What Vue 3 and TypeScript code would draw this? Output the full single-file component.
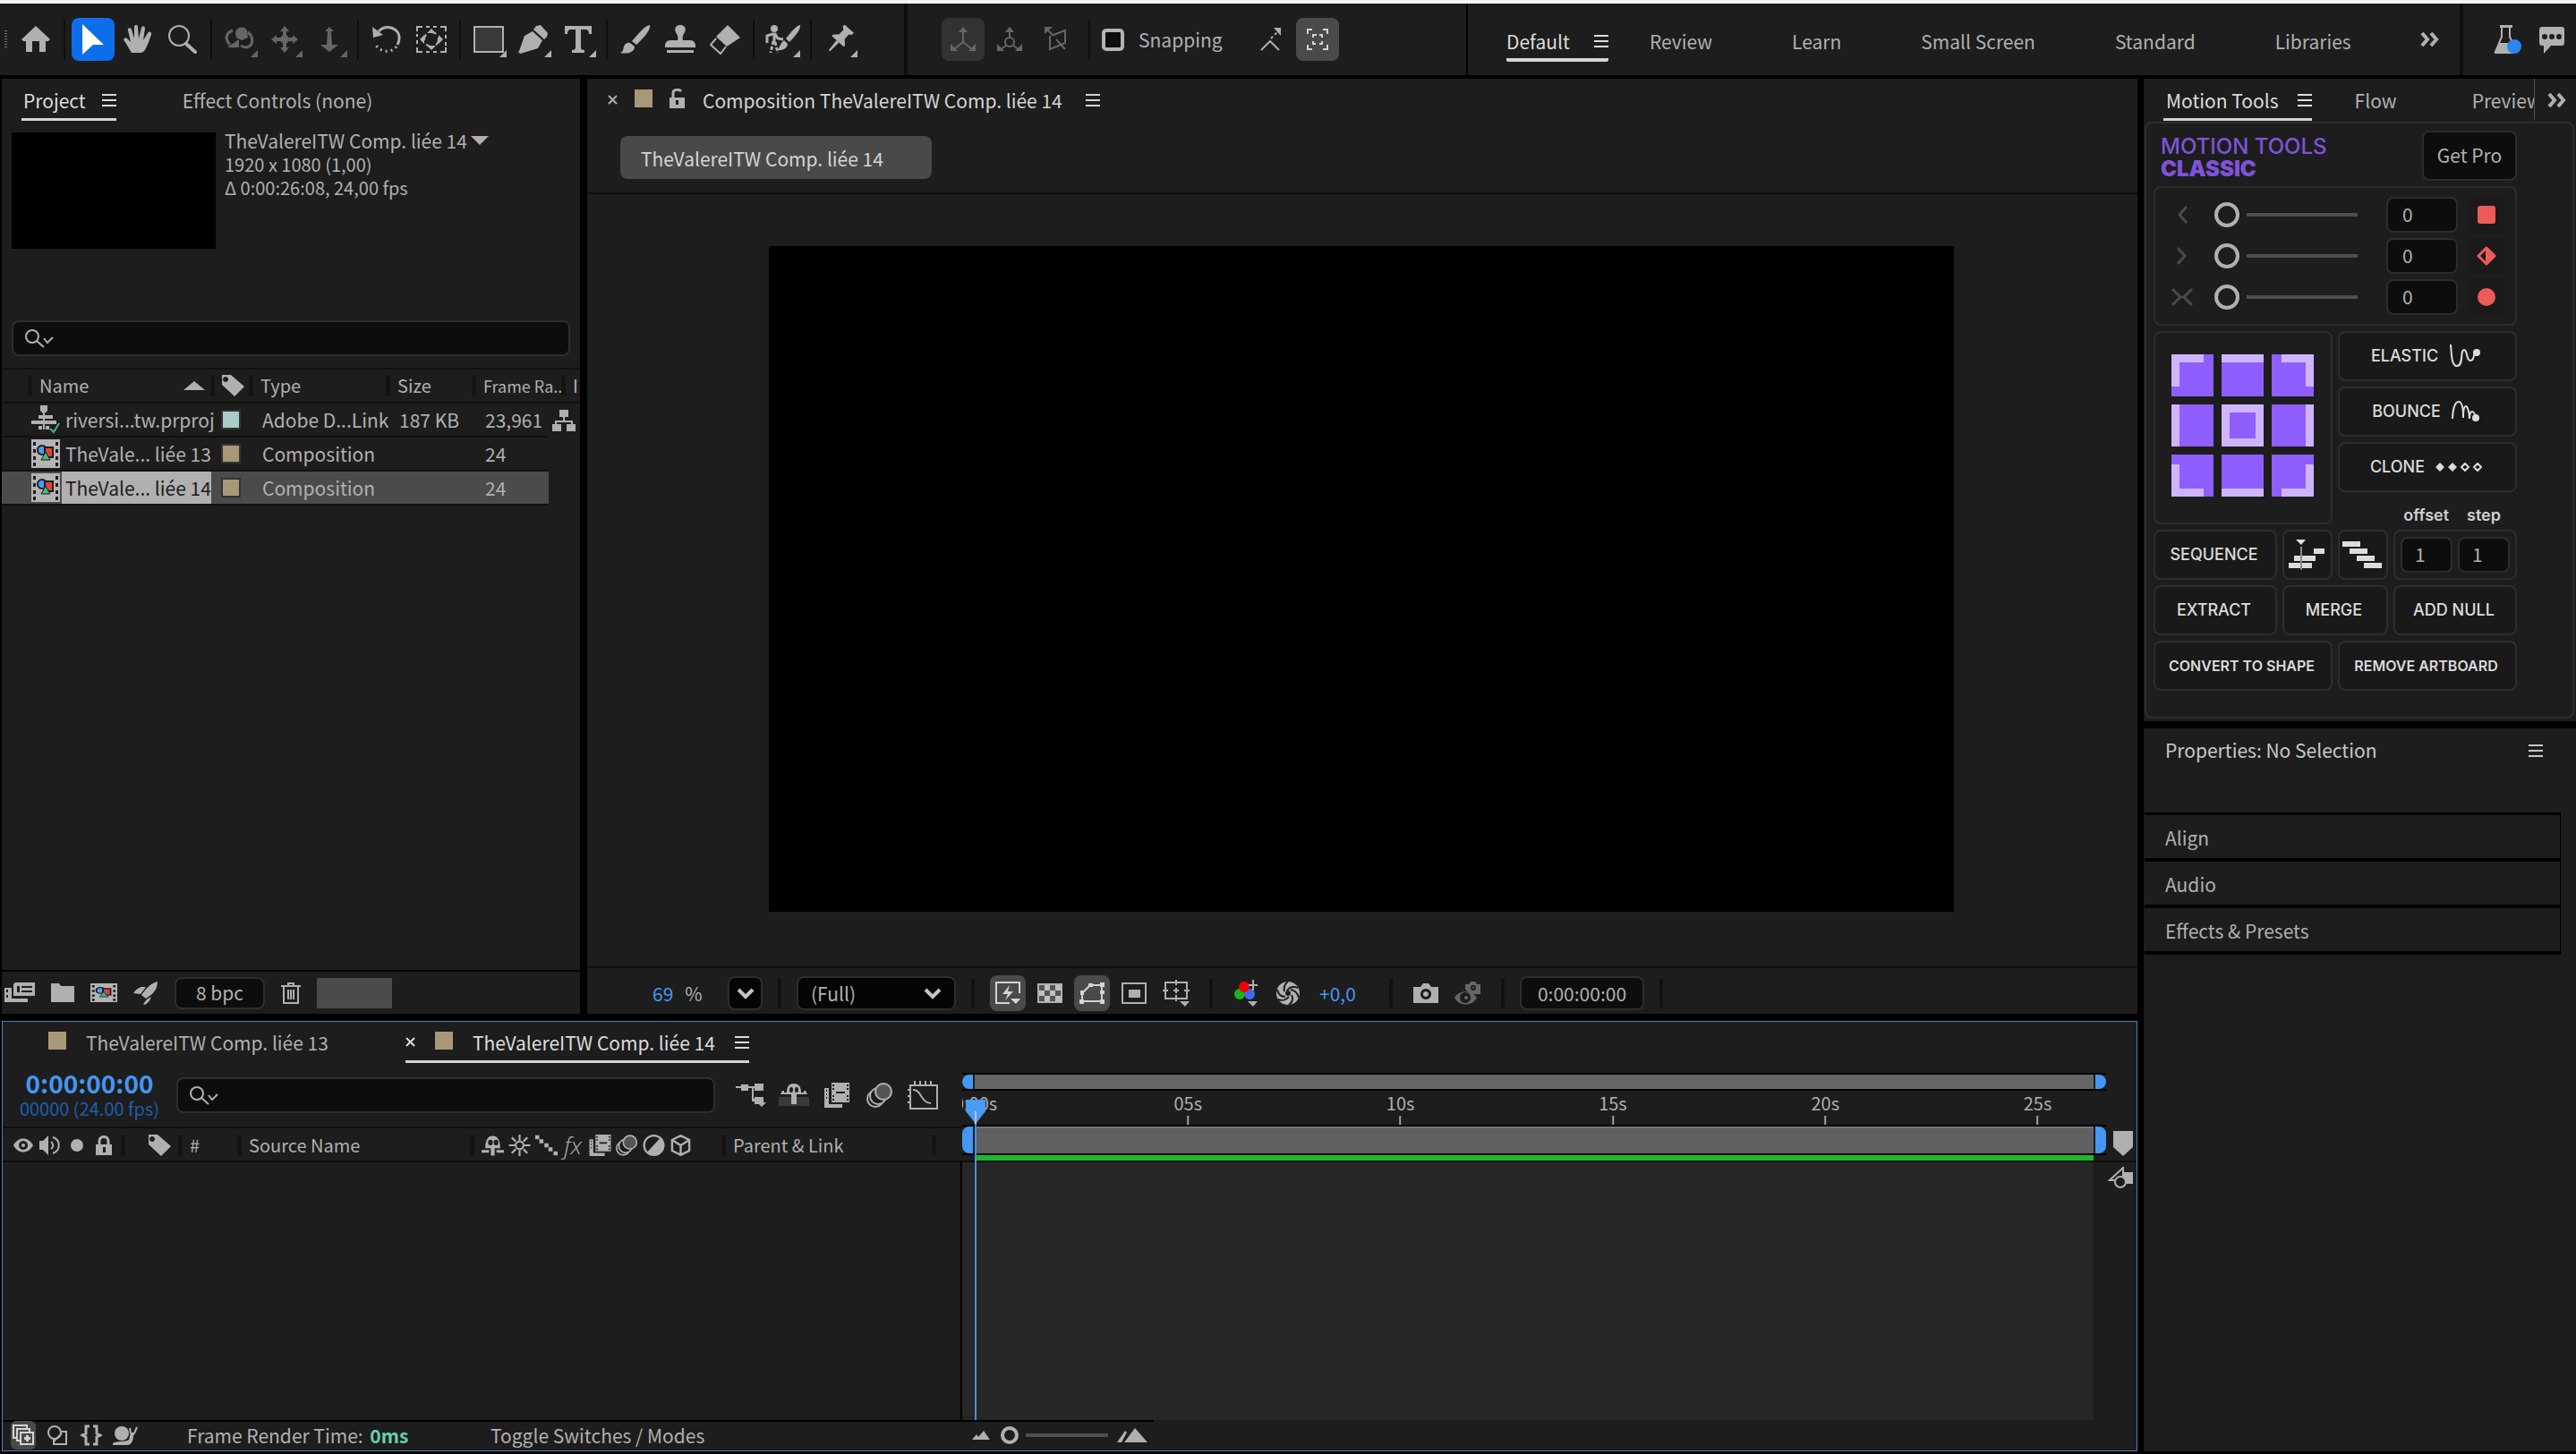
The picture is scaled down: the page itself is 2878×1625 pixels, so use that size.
<script setup lang="ts">
import { h, ref } from 'vue'

type Glyph = [number, number, string]

const film = (tone: string) =>
  `<path fill="${tone}" d="M0 0h32v32H0z"/><path fill="#1d1d1d" d="M2 3h3v4H2zM2 11h3v4H2zM2 19h3v4H2zM2 26h3v4H2zM27 3h3v4h-3zM27 11h3v4h-3zM27 19h3v4h-3zM27 26h3v4h-3z"/><circle cx="12" cy="12" r="5" fill="#4a9df8" stroke="#1d1d1d" stroke-width="2"/><path fill="#e34234" stroke="#1d1d1d" stroke-width="2" d="M15 9h9v11h-9z"/><path fill="#3cba82" stroke="#1d1d1d" d="M11 23l5-9 5 9z"/>`
const ghost =
  '<path d="M4 14C4 5 7 1 12 1s8 4 8 13z"/><path fill="#1d1d1d" d="M7 8a2.500 3 0 1 0 5 0 2.500 3 0 1 0-5 0zM13 8a2.500 3 0 1 0 5 0 2.500 3 0 1 0-5 0z"/><path d="M10 13h4v9h-4zM0 16h8v3H0zM16 16h8v3h-8z"/>'

const glyphs: Record<string, Glyph> = {
  grip: [4, 20, '<path d="M0 0h3v1H0zM0 3h3v1H0zM0 6h3v1H0zM0 9h3v1H0zM0 12h3v1H0zM0 15h3v1H0zM0 18h3v1H0z" opacity=".6"/>'],
  home: [32, 30, '<path d="M16 0l16 15-2 2h-3v11a1 1 0 0 1-1 1h-6V17h-8v12H6a1 1 0 0 1-1-1V17H2l-2-2z"/>'],
  arrow: [24, 34, '<path d="M0 0l24 23H12L0 34z"/>'],
  hand: [32, 32, '<path d="M9 31C6 26 4 22 1 18c-2-3 1-5 3-3l4 4L5 6c-1-3 3-4 4-1l3 10L12 2c0-3 4-3 4 0l1 13 3-12c1-3 4-2 4 1l-2 13 5-8c2-3 5-1 4 2-2 5-3 9-6 15-2 4-4 5-7 5z"/>'],
  zoom: [32, 32, '<g fill="none" stroke="currentColor"><circle cx="12" cy="12" r="11" stroke-width="2"/><path stroke-width="4" stroke-linecap="round" d="M20 21l10 9"/></g>'],
  orbit: [34, 30, '<path d="M12 8a7 7 0 0 1 13-3l1 8-7 3-6-3z"/><g fill="none" stroke="currentColor" stroke-width="3"><path d="M9 5C1 8 0 15 6 21M26 7c7 6 6 16-2 17-2 0-4-1-6-2"/></g><path d="M3 24h13v-9z"/>'],
  move: [30, 30, '<path d="M15 0l5 6h-3v7h7v-3l6 5-6 5v-3h-7v7h3l-5 6-5-6h3v-7H6v3l-6-5 6-5v3h7V6h-3z"/><circle cx="15" cy="15" r="5"/>'],
  dolly: [20, 28, '<path d="M10 0l5 5h-3l1 15h7L10 28 0 20h7L8 5H5z"/>'],
  rotate: [34, 32, '<g fill="none" stroke="currentColor"><path stroke-width="3" d="M8 7c9-9 24-3 23 8 0 3-1 5-2 7"/><path stroke-width="3" stroke-dasharray="2 4" d="M28 24c-6 8-20 7-24-4"/></g><path d="M1 2l12 9-11 3z"/>'],
  dashbox: [34, 30, '<g fill="none" stroke="currentColor" stroke-width="2"><path d="M1 6V1h6M11 1h4M19 1h4M27 1h6v5M33 10v4M33 18v4M33 24v5h-6M23 29h-4M15 29h-4M7 29H1v-5M1 20v-4M1 12V9"/><circle cx="17" cy="15" r="8" stroke-dasharray="7 5"/></g><path d="M17 3l5 5H12zM17 27l5-5H12zM4 15l5-5v10zM30 15l-5-5v10z"/>'],
  rect: [34, 30, '<path fill="#3a3a3a" stroke="currentColor" stroke-width="2" d="M1 1h32v28H1z"/>'],
  pen: [34, 32, '<path d="M20 1l5-1 8 9-1 4-3 3L17 5zM16 7l11 10-5 9L2 32l-2-2 9-9c-1-4 4-5 4-1 0 2-2 3-3 2l-8 8-1-1L7 12z"/>'],
  type: [30, 30, '<path d="M0 0h30v9h-3c0-3-1-5-4-5h-5v20c0 2 1 3 4 3v3H8v-3c3 0 4-1 4-3V4H7C4 4 3 6 3 9H0z"/>'],
  brush: [34, 32, '<path d="M33 0c2 5-9 17-15 22l-5-4C19 11 28 0 33 0zM11 20l5 4c0 6-7 9-16 7 4-2 3-4 4-7 1-3 4-5 7-4z"/>'],
  stamp: [34, 32, '<path d="M17 0c5 0 7 4 5 8-2 3-3 6-2 9h8c4 0 6 3 6 6v2H0v-2c0-3 2-6 6-6h8c1-3 0-6-2-9-2-4 0-8 5-8zM2 28h30v3H2z"/>'],
  eraser: [34, 33, '<path d="M20 0l14 14-15 10L7 13z"/><path fill="none" stroke="currentColor" stroke-width="2" d="M7 15l-6 7 11 10 6-8"/>'],
  roto: [40, 32, '<circle cx="11" cy="4" r="4"/><path d="M40 0c1 5-7 14-12 19l-4-4C29 9 36 0 40 0zM22 17l4 4c0 5-6 8-12 7 3-2 3-7 8-11z"/><path fill="none" stroke="currentColor" stroke-width="3" d="M3 20V12l6-2h3l3 5 6 1M11 11v8"/><path fill="none" stroke="currentColor" stroke-width="3" stroke-dasharray="4 2" d="M10 18l-3 13M12 19l3 12"/>'],
  pin: [32, 32, '<g transform="rotate(42 16 16)"><path d="M9 0h14v3l-3 2v7l5 5v2H7v-2l5-5V5L9 3z"/><path d="M14 19h4l-1 14h-2z"/></g>'],
  axis: [28, 28, '<path fill="none" stroke="currentColor" stroke-width="2" d="M14 5v12L4 25M14 17l10 8"/><path d="M14 0l5 6H9zM0 19l8 8H0zM28 19l-8 8h8z"/>'],
  axisworld: [28, 28, '<g fill="none" stroke="currentColor" stroke-width="2"><path d="M14 5v8M10 21l-6 4M18 21l6 4"/><circle cx="14" cy="17" r="5"/></g><path d="M14 0l5 6H9zM0 19l8 8H0zM28 19l-8 8h8z"/>'],
  axisview: [26, 28, '<path fill="none" stroke="currentColor" stroke-width="2" d="M6 10v15l17-7V4L10 9M3 3l7 7M13 14l10 11"/><path d="M0 0h9L0 8z"/>'],
  snapang: [24, 26, '<path fill="none" stroke="currentColor" stroke-width="2" d="M1 25l10-10 10 10"/><path fill="none" stroke="currentColor" stroke-width="2" stroke-dasharray="3 3" d="M12 12l8-8"/><path d="M15 0h8v9z"/>'],
  snapbox: [24, 24, '<path fill="none" stroke="currentColor" stroke-width="2" d="M1 6V1h5M18 1h5v5M23 18v5h-5M6 23H1v-5M7 10V7h4M14 7h3v3M17 14v3h-3M10 17H7v-3"/>'],
  more: [22, 16, '<path fill="none" stroke="currentColor" stroke-width="4" d="M2 1l6 7-6 7M12 1l6 7-6 7"/>'],
  flask: [32, 33, '<path fill="none" stroke="currentColor" stroke-width="2" d="M9 2v11L2 30h20M18 2v11l6 14"/><path d="M7 0h14v3H7zM6 20h10l6 12H1z"/><circle cx="23" cy="24" r="8" fill="#2d86f0"/>'],
  chat: [30, 31, '<path d="M4 1h22a3 3 0 0 1 3 4v13c0 3-1 4-3 4H14l-8 9v-9H4c-2 0-3-1-3-4V5c0-3 1-4 3-4z"/><path fill="#1d1d1d" d="M4 12a3 3 0 1 0 6 0 3 3 0 1 0-6 0zM12 12a3 3 0 1 0 6 0 3 3 0 1 0-6 0zM20 12a3 3 0 1 0 6 0 3 3 0 1 0-6 0z"/>'],
  menu: [16, 14, '<path d="M0 0h16v2H0zM0 6h16v2H0zM0 12h16v2H0z"/>'],
  search: [32, 22, '<g fill="none" stroke="currentColor" stroke-width="2"><circle cx="8" cy="9" r="7"/><path d="M13 14l8 7M21 11l4 5 6-6"/></g>'],
  up: [24, 10, '<path d="M12 0l12 10H0z"/>'],
  down: [20, 10, '<path d="M0 0h20L10 10z"/>'],
  tag: [26, 24, '<path fill-rule="evenodd" d="M0 0h10l15 13-11 11L0 11zM4 2a3 3 0 1 0 .1 0z"/>'],
  dynlink: [32, 32, '<path d="M10 0h8v6l-4 4-4-4zM8 11h16v4H8zM0 17h28v4H0zM8 23h4v4H8zM16 23h4v4h-4zM13 9h2v18h-2z"/><path fill="none" stroke="#3cba82" stroke-width="2" d="M21 26l4 4 6-10"/>'],
  comp: [32, 32, film('#b4b4b4')],
  flow: [26, 24, '<path d="M8 0h10v8H8zM0 16h10v8H0zM16 16h10v8H16zM12 8h2v4h9v5h-2v-3H5v3H3v-5h9z"/>'],
  footage: [34, 24, '<path fill-rule="evenodd" d="M12 0h22v15H10V2zM14 4v7h3V4zM19 6h12V4H19zM19 11h12V9H19z"/><path d="M0 6h8v12h18v4H0zM2 8v3h2V8zM2 14v3h2v-3z" fill-rule="evenodd"/>'],
  folder: [26, 21, '<path d="M0 0h9l2 3h15v18H0z"/>'],
  rocket: [28, 26, '<path d="M27 0c0 9-5 14-13 19l-5-4C14 8 19 2 27 0zM9 6h5l-6 8-8-1c3-4 5-6 9-7zM15 20l5-3c-1 4-4 7-7 9l-2-1z"/>'],
  trash: [22, 24, '<path fill="none" stroke="currentColor" stroke-width="2" d="M0 4h22M3 4v19h16V4M8 3V1h6v2M8 8v11M11 8v11M14 8v11"/>'],
  unlock: [18, 22, '<path fill="none" stroke="currentColor" stroke-width="3" d="M4 11V5c0-4 6-5 9-2"/><path fill-rule="evenodd" d="M0 10h17v12H0zM7 13v5h3v-5z"/>'],
  lock: [18, 22, '<path fill="none" stroke="currentColor" stroke-width="3" d="M4 11V6c0-6 10-6 10 0v5"/><path fill-rule="evenodd" d="M0 10h18v12H0zM8 13v6h3v-6z"/>'],
  close: [11, 11, '<path fill="none" stroke="currentColor" stroke-width="2" d="M1 1l9 9M10 1l-9 9"/>'],
  fast: [28, 26, '<path fill="none" stroke="currentColor" stroke-width="2" d="M27 13V1H1v23h15"/><path d="M16 4l-8 10h6l-3 7 9-10h-6zM17 19h11l-5 6z"/>'],
  checker: [28, 22, '<path fill="#555" d="M0 0h28v22H0z"/><path d="M0 0v22h28V0zM2 2h24v18H2z" fill-rule="evenodd"/><path fill="#c0c0c0" d="M8 2h6v6H8zM20 2h6v6h-6zM2 8h6v6H2zM14 8h6v6h-6zM8 14h6v6H8zM20 14h6v6h-6z"/>'],
  mask: [30, 26, '<path fill="none" stroke="currentColor" stroke-width="2" d="M4 22V13L13 4h13v18z"/><path d="M2 10h4v5H2zM11 2h5v4h-5zM24 1h5v5h-5zM24 10h5v4h-5zM1 20h5v5H1zM24 20h5v5h-5z"/>'],
  region: [28, 24, '<path fill="none" stroke="currentColor" stroke-width="2" d="M1 1h26v22H1z"/><path d="M8 8h13v9H8z"/>'],
  guides: [30, 30, '<path fill="none" stroke="currentColor" stroke-width="2" d="M3 3h24v18H3zM15 0v6M15 17v7M0 12h6M24 12h6M15 9v6M12 12h6"/><path d="M19 24h11l-5 6z"/>'],
  rgb: [26, 30, '<circle cx="6" cy="16" r="6" fill="#18b818"/><circle cx="17" cy="16" r="6" fill="#4068f8"/><circle cx="11" cy="8" r="6" fill="#f40000"/><path d="M20 0h2v5h4v2h-4v5h-2V7h-4V5h4zM15 24h11l-5 6z"/>'],
  aperture: [26, 26, '<circle cx="13" cy="13" r="13"/><g fill="none" stroke="#1d1d1d" stroke-width="2"><path d="M13 0c-4 3-5 6-4 11M24 7c-5-2-9-1-12 3M25 18c-1-5-4-8-9-9M14 26c4-3 5-7 3-11M2 20c5 2 8 1 12-3M1 9c1 5 4 8 9 8"/></g><circle cx="13" cy="13" r="3" fill="#1d1d1d"/>'],
  camera: [28, 22, '<path fill-rule="evenodd" d="M0 4h8l3-4h6l3 4h8v18H0zM14 6a6 6 0 1 0 .1 0zM14 9a3 3 0 1 1-.1 0z"/>'],
  showsnap: [30, 26, '<path d="M12 3h4l2-3h5l2 3h4v11H18l-6-5z"/><path fill-rule="evenodd" d="M0 18c5-9 20-9 25 0-5 10-20 10-25 0zM12 12a6 6 0 1 0 .1 0z"/><circle cx="13" cy="18" r="2"/><circle cx="21" cy="7" r="3" fill="#1d1d1d"/><circle cx="21" cy="7" r="1"/>'],
  tree: [34, 26, '<path d="M0 3h6V1h8v2h7V0h10v8H21V5h-1v12h1v-2h10v8H21v-3h-3V5h-4v3H6V5H0zM24 21h10l-5 5z"/>'],
  shy: [34, 26, '<path fill="#3a3a3a" d="M0 15h34v10H0z"/><path d="M17 0c6 0 8 4 8 10h3V8h2l2 4H2l2-4h2v2h3c0-6 2-10 8-10zM14 11h6v12h-6z"/><path fill="#1d1d1d" d="M12 7a2 3 0 1 0 4 0 2 3 0 1 0-4 0zM18 7a2 3 0 1 0 4 0 2 3 0 1 0-4 0z"/>'],
  blend: [28, 28, '<path fill-rule="evenodd" d="M8 0h20v22H8zM13 10v2h10v-2zM9 2v2h2V2zM9 6v2h2V6zM9 14v2h2v-2zM9 18v2h2v-2zM25 2v2h2V2zM25 6v2h2V6zM25 14v2h2v-2zM25 18v2h2v-2z"/><path d="M0 6h5v18h15v4H0zM2 8v2h1V8zM2 12v2h1v-2zM2 16v2h1v-2z" fill-rule="evenodd"/>'],
  blur: [30, 28, '<g fill="none" stroke="currentColor" stroke-width="2"><circle cx="10" cy="18" r="9"/><circle cx="13" cy="15" r="9" fill="#1d1d1d"/><circle cx="19" cy="10" r="9" fill="#555"/></g>'],
  graph: [34, 32, '<path fill="none" stroke="currentColor" stroke-width="2" d="M3 5h30v26H3zM8 0v5M14 0v5M20 0v5M26 0v5M0 10h3M0 17h3M0 24h3M6 10c9-1 9 15 20 15"/>'],
  eye: [22, 16, '<path fill-rule="evenodd" d="M0 8C5-2 17-2 22 8c-5 10-17 10-22 0zM11 3a5 5 0 1 0 .1 0z"/><circle cx="11" cy="8" r="2"/>'],
  speaker: [24, 22, '<path d="M0 6h4l6-6v22l-6-6H0z"/><path fill="none" stroke="currentColor" stroke-width="2" d="M13 7c3 2 3 6 0 8M15 2c9 3 9 15 0 18"/>'],
  dot: [14, 14, '<circle cx="7" cy="7" r="7"/>'],
  ghost: [24, 22, ghost],
  sun: [22, 22, '<g fill="none" stroke="currentColor" stroke-width="2"><circle cx="11" cy="11" r="4"/><path d="M11 0v6M11 16v6M0 11h6M16 11h6M3 3l4 4M15 15l4 4M19 3l-4 4M7 15l-4 4"/></g>'],
  quality: [22, 20, '<path d="M0 0h4v4H0zM4 4h4v4H4zM9 8h4v4H9zM13 12h4v4h-4zM18 16h4v4h-4z"/>'],
  half: [22, 22, '<circle cx="11" cy="11" r="10" fill="none" stroke="currentColor" stroke-width="2"/><path d="M18 3L4 18a10 10 0 0 0 14-15z"/>'],
  cube: [20, 20, '<path fill="none" stroke="currentColor" stroke-width="2" d="M10 1l8 4v10l-8 4-8-4V5zM2 5l8 5 8-5M10 10v9"/>'],
  marker: [22, 28, '<path d="M0 0h22v18L11 28 0 18z"/>'],
  shapes: [28, 26, '<path d="M16 6h12v13H16z"/><path fill="none" stroke="currentColor" stroke-width="2" d="M17 1v14H2z"/><circle cx="14" cy="17" r="6" fill="#1d1d1d" stroke="currentColor" stroke-width="2"/>'],
  layers: [24, 24, '<path fill="none" stroke="currentColor" stroke-width="2" d="M16 4V1H1v14h3M19 9V5H5v13h3M9 9h14v13H9z"/><path d="M15 12h3v7h-3zM13 14h7v3h-7z"/>'],
  toggles: [24, 24, '<circle cx="9" cy="9" r="7" fill="none" stroke="currentColor" stroke-width="2"/><path fill="none" stroke="currentColor" stroke-width="2" d="M8 16v6h14V8h-5M8 19l9-9"/>'],
  braces: [24, 24, '<path fill="none" stroke="currentColor" stroke-width="3" d="M10 2H6v8l-4 2 4 2v8h4M14 2h4v8l4 2-4 2v8h-4"/>'],
  snail: [28, 22, '<circle cx="10" cy="9" r="8"/><path d="M0 20c5-3 14-1 18-4l2-8h4v3h-1c0 6-2 11-7 11H0z"/><path fill="none" stroke="currentColor" stroke-width="2" d="M20 9l-1-6M24 9l3-7"/>'],
  hill: [20, 10, '<path d="M0 10l5-6 2 3 6-7 7 10z"/>'],
  hills: [34, 16, '<path d="M0 16L9 3l2 2-6 11zM8 16L20 0l14 16z"/>'],
  left: [12, 20, '<path fill="none" stroke="currentColor" stroke-width="3" d="M11 1l-8 9 8 9"/>'],
  right: [12, 20, '<path fill="none" stroke="currentColor" stroke-width="3" d="M1 1l8 9-8 9"/>'],
  both: [24, 20, '<path fill="none" stroke="currentColor" stroke-width="3" d="M1 1l9 9-9 9M23 1l-9 9 9 9M9 10h6"/>'],
  redsquare: [20, 20, '<rect width="20" height="20" rx="3"/>'],
  reddiamond: [22, 22, '<path stroke="currentColor" stroke-width="3" stroke-linejoin="round" d="M11 2l9 9-9 9-9-9z"/><path fill="#1a1a1a" d="M10 5v12l-6-6z"/>'],
  redcircle: [20, 20, '<circle cx="10" cy="10" r="10"/>'],
  elastic: [36, 28, '<path fill="none" stroke="currentColor" stroke-width="2" d="M2 1c1 12 1 24 7 24 8 0 3-18 8-18 4 0 2 12 7 12 4 0 3-4 5-9"/><circle cx="31" cy="10" r="4"/>'],
  bounce: [32, 24, '<path fill="none" stroke="currentColor" stroke-width="2" d="M1 20C1 12 3 1 8 1s5 14 5 18c0-8 1-13 3-13s4 8 4 14c0-5 1-8 3-8s3 3 4 6"/><circle cx="27" cy="19" r="4"/>'],
  clones: [52, 10, '<path d="M5 0l5 5-5 5-5-5zM19 0l5 5-5 5-5-5z"/><path fill="none" stroke="currentColor" stroke-width="2" d="M33 1l4 4-4 4-4-4zM47 1l4 4-4 4-4-4z"/>'],
  seqhead: [40, 34, '<path d="M8 0h11l-5 6zM28 10h12v6H28zM6 18h24v6H6zM0 26h26v6H0z"/><path fill="#8a8a8a" d="M13 8h2v26h-2z"/>'],
  seqstep: [44, 30, '<path d="M0 0h20v6H0zM8 8h20v6H8zM16 16h20v6H16zM24 24h20v6H24z"/>'],
}

const Icon = (props: { n: string }) => {
  const [w, hgt, body] = glyphs[props.n]
  return h('svg', { width: w, height: hgt, viewBox: `0 0 ${w} ${hgt}`, fill: 'currentColor', 'aria-hidden': 'true', innerHTML: body })
}
Icon.props = ['n']

interface Tool { n: string; more?: boolean; dim?: boolean; on?: boolean }
const toolGroups: Tool[][] = [
  [{ n: 'home' }],
  [{ n: 'arrow', on: true }, { n: 'hand' }, { n: 'zoom' }],
  [{ n: 'orbit', dim: true, more: true }, { n: 'move', dim: true, more: true }, { n: 'dolly', dim: true, more: true }],
  [{ n: 'rotate' }, { n: 'dashbox' }],
  [{ n: 'rect', more: true }, { n: 'pen', more: true }, { n: 'type', more: true }],
  [{ n: 'brush' }, { n: 'stamp' }, { n: 'eraser' }],
  [{ n: 'roto', more: true }],
  [{ n: 'pin', more: true }],
]
const workspaces = ['Default', 'Review', 'Learn', 'Small Screen', 'Standard', 'Libraries']
const items = [
  { icon: 'dynlink', name: 'riversi...tw.prproj', tint: '#a9ccc6', type: 'Adobe D...Link', size: '187 KB', rate: '23,961', linked: true },
  { icon: 'comp', name: 'TheVale... liée 13', tint: '#a99877', type: 'Composition', size: '', rate: '24' },
  { icon: 'comp', name: 'TheVale... liée 14', tint: '#a99877', type: 'Composition', size: '', rate: '24', selected: true },
]
const easing = ref([
  { icon: 'left', red: 'redsquare', label: 'Ease in', value: 0 },
  { icon: 'right', red: 'reddiamond', label: 'Ease out', value: 0 },
  { icon: 'both', red: 'redcircle', label: 'Ease both', value: 0 },
])
const anchors = ['tl', 't', 'tr', 'l', 'c', 'r', 'bl', 'b', 'br']
const ticks = ['0:00s', '05s', '10s', '15s', '20s', '25s']
const panels = ['Align', 'Audio', 'Effects & Presets']
const switches = ['ghost', 'sun', 'quality', 'fx', 'blend', 'blur', 'half', 'cube']
const zoom = ref(0)
</script>

<template>
  <div class="app">
    <header class="toolbar">
      <div class="tools">
        <Icon n="grip" class="grip" />
        <template v-for="(g, gi) in toolGroups" :key="gi">
          <i v-if="gi" class="sep"></i>
          <button v-for="t in g" :key="t.n" class="tool" :class="{ on: t.on, dim: t.dim }" :aria-label="t.n">
            <Icon :n="t.n" /><i v-if="t.more" class="corner"></i>
          </button>
        </template>
      </div>
      <div class="snap">
        <button class="tool wide dim soft" aria-label="Local axis"><Icon n="axis" /></button>
        <button class="tool wide dim" aria-label="World axis"><Icon n="axisworld" /></button>
        <button class="tool wide dim" aria-label="View axis"><Icon n="axisview" /></button>
        <i class="sep broad"></i>
        <label class="snapping"><input type="checkbox" />Snapping</label>
        <button class="tool wide" aria-label="Snap to edges"><Icon n="snapang" /></button>
        <button class="tool wide lit" aria-label="Snap to bounds"><Icon n="snapbox" /></button>
      </div>
      <nav class="spaces">
        <button v-for="(w, i) in workspaces" :key="w" class="space" :class="{ on: !i }">{{ w }}<span class="slot"><Icon v-if="!i" n="menu" /></span></button>
        <button class="bare" aria-label="More workspaces"><Icon n="more" /></button>
      </nav>
      <div class="corner-tools">
        <button class="bare" aria-label="Beta"><Icon n="flask" /></button>
        <button class="bare" aria-label="Feedback"><Icon n="chat" /></button>
      </div>
    </header>

    <main class="body">
      <div class="left">
        <div class="upper">
          <section class="panel project">
            <div class="tabs">
              <button class="tab on">Project<Icon n="menu" /></button>
              <button class="tab">Effect Controls (none)</button>
            </div>
            <div class="info">
              <div class="thumb"></div>
              <div class="meta">
                <div class="row">TheValereITW Comp. liée 14<Icon n="down" /></div>
                <div class="fine">1920 x 1080 (1,00)</div>
                <div class="fine">Δ 0:00:26:08, 24,00 fps</div>
              </div>
            </div>
            <label class="search"><Icon n="search" /><input type="text" aria-label="Search project" /></label>
            <table class="items">
              <colgroup><col class="c1" /><col class="c2" /><col class="c3" /><col class="c4" /><col class="c5" /><col class="c6" /><col /></colgroup>
              <thead>
                <tr>
                  <th class="first"><div class="cell">Name<Icon n="up" class="sort" /></div></th>
                  <th><div class="cell"><Icon n="tag" /></div></th>
                  <th><div class="cell">Type</div></th>
                  <th><div class="cell">Size</div></th>
                  <th colspan="2"><div class="cell">Frame Ra...</div></th>
                  <th><div class="cell">I</div></th>
                </tr>
              </thead>
              <tbody>
                <tr v-for="it in items" :key="it.name" :class="{ selected: it.selected }">
                  <td><div class="name"><Icon :n="it.icon" /><span>{{ it.name }}</span></div></td>
                  <td><i class="chip" :style="{ background: it.tint }"></i></td>
                  <td>{{ it.type }}</td>
                  <td>{{ it.size }}</td>
                  <td>{{ it.rate }}</td>
                  <td colspan="2" class="tail"><Icon v-if="it.linked" n="flow" /></td>
                </tr>
              </tbody>
            </table>
            <div class="projbar">
              <button class="bare" aria-label="Interpret footage"><Icon n="footage" /></button>
              <button class="bare" aria-label="New folder"><Icon n="folder" /></button>
              <button class="bare" aria-label="New composition"><svg width="30" height="21" viewBox="0 0 32 32" preserveAspectRatio="none" v-html="glyphs.comp[2]"></svg></button>
              <button class="bare" aria-label="Project settings"><Icon n="rocket" /></button>
              <button class="bpc">8 bpc</button>
              <button class="bare" aria-label="Delete"><Icon n="trash" /></button>
              <i class="block"></i>
            </div>
          </section>

          <section class="panel comp">
            <div class="tabs">
              <button class="bare" aria-label="Close tab"><Icon n="close" /></button>
              <i class="sw"></i>
              <button class="bare lockbtn" aria-label="Lock view"><Icon n="unlock" /></button>
              <button class="bare bright comptab">Composition TheValereITW Comp. liée 14<Icon n="menu" /></button>
            </div>
            <div class="crumbs"><button class="crumb">TheValereITW Comp. liée 14</button></div>
            <div class="viewer"><div class="frame"></div></div>
            <div class="viewbar">
              <div class="mag"><span class="blue">69</span><span>%</span></div>
              <button class="drop" aria-label="Magnification"><svg width="20" height="13" viewBox="0 0 20 13"><path d="M2 2l8 8 8-8" fill="none" stroke="#c4c4c4" stroke-width="4" /></svg></button>
              <i class="vsep"></i>
              <div class="full">
                <select aria-label="Resolution"><option>(Full)</option></select>
                <svg width="20" height="13" viewBox="0 0 20 13"><path d="M2 2l8 8 8-8" fill="none" stroke="#c4c4c4" stroke-width="4" /></svg>
              </div>
              <i class="vsep"></i>
              <div class="vgroup">
                <button class="vbtn lit" aria-label="Fast previews"><Icon n="fast" /></button>
                <button class="vbtn" aria-label="Transparency grid"><Icon n="checker" /></button>
                <button class="vbtn lit" aria-label="Masks"><Icon n="mask" /></button>
                <button class="vbtn" aria-label="Region of interest"><Icon n="region" /></button>
                <button class="vbtn" aria-label="Guides"><Icon n="guides" /></button>
              </div>
              <i class="vsep"></i>
              <div class="vgroup exposure">
                <button class="vbtn" aria-label="Channels"><Icon n="rgb" /></button>
                <button class="vbtn" aria-label="Reset exposure"><Icon n="aperture" /></button>
                <span class="blue stops">+0,0</span>
              </div>
              <i class="vsep"></i>
              <div class="vgroup">
                <button class="vbtn" aria-label="Take snapshot"><Icon n="camera" /></button>
                <button class="vbtn dim" aria-label="Show snapshot"><Icon n="showsnap" /></button>
              </div>
              <i class="vsep"></i>
              <input class="time" aria-label="Preview time" value="0:00:00:00" />
              <i class="vsep"></i>
            </div>
          </section>
        </div>

        <section class="timeline">
          <div class="tltabs">
            <button class="tltab"><i class="sw"></i>TheValereITW Comp. liée 13</button>
            <button class="tltab on"><Icon n="close" /><i class="sw"></i>TheValereITW Comp. liée 14<Icon n="menu" /></button>
          </div>
          <div class="tlbody">
            <div class="tlleft">
              <div class="controls">
                <div class="clock"><strong>0:00:00:00</strong><small>00000 (24.00 fps)</small></div>
                <label class="search"><Icon n="search" /><input type="text" aria-label="Search layers" /></label>
                <div class="ctlicons">
                  <button v-for="n in ['tree', 'shy', 'blend', 'blur', 'graph']" :key="n" class="ctl" :aria-label="n"><Icon :n="n" /></button>
                </div>
              </div>
              <div class="cols">
                <div class="av"><span v-for="n in ['eye', 'speaker', 'dot', 'lock']" :key="n" class="c30"><Icon :n="n" /></span></div>
                <div class="col label"><Icon n="tag" /></div>
                <div class="col num">#</div>
                <div class="col source">Source Name</div>
                <div class="col switches">
                  <span v-for="n in switches" :key="n" class="c30"><em v-if="n === 'fx'">fx</em><Icon v-else :n="n" class="fit" /></span>
                </div>
                <div class="col parent">Parent &amp; Link</div>
                <div class="col rest"></div>
              </div>
              <div class="layers"></div>
            </div>
            <div class="tlright">
              <div class="nav"><i class="cap start"></i><i class="bar"></i><i class="cap stop"></i></div>
              <div class="ruler"><div class="scale"><span v-for="(t, i) in ticks" :key="t" class="tick" :style="{ left: i * 19 + '%' }">{{ t }}</span></div></div>
              <div class="work"><i class="cap start"></i><i class="bar"></i><i class="cap stop"></i></div>
              <div class="cache"><i></i></div>
              <div class="tracks"><div class="lane"></div></div>
              <div class="playhead"><svg width="22" height="27" viewBox="0 0 22 27"><path fill="#4a9cf5" d="M0 0h22v13L11 27 0 13z" /><path fill="#b9c4d0" d="M10 13h2v14h-2z" /></svg></div>
              <div class="side"><Icon n="marker" /><Icon n="shapes" /></div>
            </div>
          </div>
          <footer class="foot">
            <button class="fbtn lit" aria-label="Layer switches"><Icon n="layers" /></button>
            <button class="fbtn" aria-label="Transfer controls"><Icon n="toggles" /></button>
            <button class="fbtn" aria-label="In and out"><Icon n="braces" /></button>
            <button class="fbtn" aria-label="Render time"><Icon n="snail" /></button>
            <div class="render">Frame Render Time: <b>0ms</b></div>
            <button class="bare toggle">Toggle Switches / Modes</button>
            <div class="zoomer">
              <Icon n="hill" />
              <input v-model="zoom" type="range" aria-label="Timeline zoom" min="0" max="100" />
              <Icon n="hills" />
            </div>
          </footer>
        </section>
      </div>

      <aside class="right">
        <section class="panel motion">
          <div class="tabs">
            <button class="tab on">Motion Tools<Icon n="menu" /></button>
            <button class="tab">Flow</button>
            <button class="tab cut">Preview</button>
            <button class="bare moretabs" aria-label="More panels"><Icon n="more" /></button>
          </div>
          <div class="mt">
            <div class="brand">
              <h1>MOTION TOOLS<b>CLASSIC</b></h1>
              <button class="pro">Get Pro</button>
            </div>
            <div class="kit">
              <div class="box easing">
                <div v-for="e in easing" :key="e.label" class="ease">
                  <span class="dir"><Icon :n="e.icon" /></span>
                  <input v-model="e.value" type="range" min="0" max="100" :aria-label="e.label" />
                  <input v-model="e.value" class="val" :aria-label="e.label + ' value'" />
                  <button class="red" :aria-label="e.label + ' key'"><Icon :n="e.red" /></button>
                </div>
              </div>
              <div class="box anchors"><button v-for="a in anchors" :key="a" :class="a" :aria-label="'Anchor ' + a"></button></div>
              <div class="stack">
                <button class="key">ELASTIC<Icon n="elastic" /></button>
                <button class="key">BOUNCE<Icon n="bounce" /></button>
                <button class="key">CLONE<Icon n="clones" /></button>
                <div class="captions"><label for="offset">offset</label><label for="step">step</label></div>
              </div>
              <button class="key">SEQUENCE</button>
              <button class="key" aria-label="Sequence at playhead"><Icon n="seqhead" /></button>
              <button class="key" aria-label="Sequence in steps"><Icon n="seqstep" /></button>
              <div class="box pair"><input id="offset" value="1" /><input id="step" value="1" /></div>
              <button class="key">EXTRACT</button>
              <button class="key w2">MERGE</button>
              <button class="key">ADD NULL</button>
              <button class="key half">CONVERT TO SHAPE</button>
              <button class="key half">REMOVE ARTBOARD</button>
            </div>
          </div>
        </section>
        <section class="panel props">
          <div class="prophead">Properties: No Selection<Icon n="menu" /></div>
          <button v-for="p in panels" :key="p" class="fold">{{ p }}</button>
        </section>
      </aside>
    </main>
  </div>
</template>

<style>
body { margin: 0; background: #000; }
</style>

<style scoped>
* { box-sizing: border-box; }
.app {
  display: flex; flex-direction: column; min-height: 100vh; background: #000; color: #b0b0b0;
  border-top: 4px solid #f4f4f4;
  font: 21px/26px "Noto Sans CJK SC", "Noto Sans", sans-serif;
}
button, input, select { font: inherit; color: inherit; background: none; border: 0; padding: 0; margin: 0; outline: 0; appearance: none; }
svg { display: block; flex: none; }
i { display: block; flex: none; }
button { display: flex; align-items: center; white-space: nowrap; }
.bare { flex: none; }
.panel { background: #1d1d1d; }
.blue { color: #4497f2; }
.sw { width: 20px; height: 20px; margin-bottom: 3px; background: #a99877; }

.toolbar { display: flex; height: 80px; background: #1d1d1d; }
.tools { display: flex; flex: none; align-items: center; width: 1014px; border-right: 4px solid #0e0e0e; }
.grip { width: 4px; height: 20px; margin: 0 6px 0 5px; }
.tool { position: relative; justify-content: center; width: 48px; height: 48px; margin: 0 1px; border-radius: 8px; }
.tool.on { background: #0d6eeb; color: #fff; }
.dim { color: #666; }
.tool.wide { margin: 0 2px; }
.soft { background: #323232; }
.lit { background: #4a4a4a; color: #d4d4d4; }
.corner { position: absolute; right: 4px; bottom: 4px; border: 4px solid transparent; border-right-color: currentColor; border-bottom-color: currentColor; }
.sep { width: 2px; height: 44px; margin: 0 6px; background: #0e0e0e; }
.sep.broad { margin: 0 13px 0 10px; }
.snap { display: flex; flex: none; align-items: center; width: 626px; padding-left: 36px; border-right: 2px solid #000; }
.snapping { display: flex; align-items: center; gap: 16px; width: 163px; }
.snapping input { width: 25px; height: 25px; border: 4px solid #b4b4b4; border-radius: 5px; background: #0e0e0e; }
.spaces { display: flex; flex: 1; align-items: center; gap: 46px; padding: 0 22px 0 43px; border-right: 4px solid #0e0e0e; }
.space { flex: none; height: 48px; margin-top: 2px; padding-top: 5px; border-bottom: 4px solid transparent; }
.space.on { border-color: #d4d4d4; color: #dcdcdc; border-radius: 2px; }
.slot { display: flex; width: 43px; justify-content: flex-end; }
.space:nth-child(6) .slot { width: 24px; }
.spaces > .bare { margin-left: auto; }
.corner-tools { display: flex; flex: none; align-items: center; gap: 18px; width: 126px; padding-left: 34px; }

.body { display: grid; flex: 1; grid-template-columns: minmax(0, 1fr) 483px; gap: 7px; padding: 4px 0 3px 2px; }
.left { display: flex; flex-direction: column; gap: 8px; min-width: 0; }
.upper { display: grid; flex: 1; grid-template-columns: 646px minmax(0, 1fr); gap: 8px; }
.tabs { display: flex; align-items: center; height: 47px; }
.tab { height: 47px; gap: 21px; padding-top: 3px; border-bottom: 3px solid transparent; }
.tab.on { padding-left: 3px; border-color: #d4d4d4; color: #dcdcdc; }

.project { display: flex; flex-direction: column; }
.project .tabs { padding-left: 22px; gap: 74px; }
.project .tab.on { gap: 18px; padding-left: 2px; }
.info { display: flex; gap: 10px; height: 223px; padding: 8px 0 0 11px; }
.thumb { width: 228px; height: 130px; margin-top: 5px; background: #000; }
.meta .row { display: flex; align-items: center; gap: 4px; height: 28px; }
.fine { font-size: 20px; }
.search { display: flex; align-items: center; height: 40px; margin: 0 11px; padding-left: 13px; background: #0d0d0d; border: 2px solid #2d2d2d; border-radius: 8px; }
.search input { flex: 1; min-width: 0; }
.items { width: 100%; margin-top: 13px; border-collapse: collapse; table-layout: fixed; border-top: 2px solid #111; white-space: nowrap; }
.c1 { width: 233px; } .c2 { width: 43px; } .c3 { width: 153px; } .c4 { width: 96px; } .c5 { width: 86px; } .c6 { width: 14px; }
.items th { height: 38px; padding: 0; border-bottom: 2px solid #111; font-weight: 400; font-size: 20px; text-align: left; }
.items th:nth-child(5) { font-size: 18px; }
.cell { display: flex; align-items: center; }
.cell::before { content: ""; flex: none; width: 5px; height: 22px; margin-right: 8px; background: #131313; }
.first .cell { padding-left: 29px; }
.sort { margin: 0 6px 0 auto; }
.items td { height: 38px; padding: 0 0 0 15px; border-bottom: 2px solid #111; line-height: 36px; }
.items td:first-child { padding: 0; }
.items td.tail { border: 0; padding: 0 0 0 4px; }
.name { display: flex; align-items: center; gap: 2px; padding-left: 33px; }
.name span { flex: 1; padding-left: 4px; }
.selected td { background: #4b4b4b; }
.selected .tail { background: none; }
.selected .name span { background: #b0b0b0; color: #1d1d1d; }
.chip { width: 22px; height: 22px; margin-left: -3px; border: 2px solid #333; }
.projbar { display: flex; align-items: center; height: 49px; margin-top: auto; padding-left: 3px; border-top: 2px solid #000; gap: 18px; }
.bpc { justify-content: center; width: 101px; height: 36px; padding-bottom: 1px; background: #0d0d0d; border: 2px solid #2d2d2d; border-radius: 8px; }
.block { width: 84px; height: 34px; background: #4b4b4b; }

.comp { display: flex; flex-direction: column; }
.comp .tabs { padding-left: 23px; gap: 19px; }
.lockbtn { margin-bottom: 4px; }
.bright { color: #d4d4d4; }
.comptab { gap: 26px; padding-top: 1px; }
.crumbs { height: 82px; padding: 17px 37px; border-bottom: 2px solid #0e0e0e; }
.crumb { width: 348px; height: 48px; padding: 2px 0 0 23px; background: #494949; border-radius: 8px; color: #d4d4d4; }
.viewer { display: flex; flex: 1; align-items: center; padding: 0 205px 3px 203px; }
.frame { width: 100%; aspect-ratio: 16 / 9; background: #000; }
.viewbar { display: flex; align-items: center; height: 53px; padding-top: 5px; border-top: 2px solid #0e0e0e; }
.mag { display: flex; gap: 13px; width: 157px; padding-left: 73px; }
.drop { justify-content: center; width: 39px; height: 38px; background: #050505; border: 2px solid #2d2d2d; border-radius: 8px; }
.vsep { width: 4px; height: 32px; margin: 0 17px; background: #111; }
.full { display: flex; align-items: center; width: 178px; height: 38px; padding: 0 14px; background: #050505; border: 2px solid #2d2d2d; border-radius: 8px; }
.full select { flex: 1; }
.vgroup { display: flex; align-items: center; gap: 7px; }
.exposure { width: 163px; }
.stops { margin-left: 8px; }
.vbtn { justify-content: center; width: 40px; height: 40px; border-radius: 8px; }
.time { width: 139px; height: 38px; background: #0d0d0d; border: 2px solid #2d2d2d; border-radius: 8px; text-align: center; }

.timeline { display: flex; flex-direction: column; height: 481px; background: #1d1d1d; border: 1px solid #4d80c4; }
.tltabs { display: flex; height: 46px; padding-left: 51px; }
.tltab { height: 46px; gap: 22px; padding-top: 2px; border-bottom: 3px solid transparent; }
.tltab.on { margin-left: 86px; border-color: #d4d4d4; color: #dcdcdc; }
.tlbody { display: grid; flex: 1; grid-template-columns: 1072px minmax(0, 1fr); }
.tlleft { display: flex; flex-direction: column; }
.controls { display: flex; align-items: center; height: 71px; }
.clock { width: 194px; text-align: center; color: #4497f2; }
.clock strong, .clock small { display: block; }
.clock strong { font-size: 28px; font-weight: 700; line-height: 30px; }
.clock small { font-size: 20px; color: #1b5fae; line-height: 28px; }
.controls .search { width: 602px; margin: 0; }
.ctlicons { display: flex; padding-left: 16px; }
.ctl { justify-content: center; width: 48px; height: 40px; }
.cols { display: flex; align-items: center; height: 40px; padding-top: 2px; border: solid #0e0e0e; border-width: 2px 0; font-size: 20px; }
.av { display: flex; width: 132px; padding-left: 8px; }
.c30 { display: flex; justify-content: center; align-items: center; width: 30px; height: 26px; }
.c30 em { font-size: 26px; font-family: "Open Sans", sans-serif; font-weight: 300; }
.fit { width: 25px; height: 24px; }
.col { display: flex; align-items: center; }
.col::before { content: ""; flex: none; width: 5px; height: 22px; margin-right: 8px; background: #131313; }
.label { width: 64px; } .label svg { margin-left: 18px; }
.num { width: 66px; } .source { width: 260px; } .switches { width: 281px; } .switches::before { margin-right: 5px; }
.parent { width: 235px; }
.layers { flex: 1; border-right: 2px solid #000; }

.tlright { position: relative; display: flex; flex-direction: column; padding-top: 11px; }
.nav, .work { display: flex; margin-right: 34px; gap: 2px; border: solid #000; border-width: 2px 0; }
.nav .bar { flex: 1; height: 16px; background: #666; }
.work .bar { flex: 1; height: 30px; background: #606060; border-top: 2px solid #757575; }
.cap { width: 12px; background: #4497f2; }
.cap.start { border-radius: 8px 0 0 8px; }
.cap.stop { border-radius: 0 8px 8px 0; }
.ruler { height: 38px; overflow-x: clip; font-size: 20px; line-height: 28px; }
.scale { position: relative; height: 38px; margin: 0 48px 0 15px; }
.tick { position: absolute; bottom: 0; display: flex; flex-direction: column; align-items: center; height: 38px; transform: translateX(-50%); }
.tick::after { content: ""; width: 2px; height: 10px; margin-top: auto; background: #a0a0a0; }
.cache { height: 8px; padding: 0 48px 0 15px; background: #1d1d1d; border-bottom: 2px solid #0e0e0e; }
.cache i { height: 6px; background: #18bd28; }
.tracks { flex: 1; padding-right: 48px; }
.lane { height: 100%; background: #262626; }
.playhead { position: absolute; left: 4px; top: 41px; bottom: 0; width: 22px; }
.playhead::after { content: ""; position: absolute; left: 10px; top: 27px; bottom: 0; width: 2px; background: #4a90dc; }
.side { position: absolute; right: 4px; top: 76px; display: flex; flex-direction: column; align-items: flex-end; gap: 12px; }
.foot { display: flex; align-items: center; height: 34px; padding-left: 9px; background: linear-gradient(#000, #000) 0 0 / 1286px 2px no-repeat; }
.fbtn { justify-content: center; width: 28px; height: 32px; margin-right: 10px; border-radius: 6px; }
.render { width: 339px; margin-left: 45px; }
.render b { margin-left: 3px; color: #66d0b0; font-weight: 700; }
.toggle { width: 538px; }
.zoomer { display: flex; align-items: center; gap: 10px; }
.zoomer input { width: 122px; height: 20px; }
input[type="range"]::-webkit-slider-thumb { appearance: none; border: 4px solid #b0b0b0; border-radius: 50%; }
.zoomer input::-webkit-slider-runnable-track { height: 4px; background: linear-gradient(90deg, transparent 30px, #4f4f4f 30px); }
.zoomer input::-webkit-slider-thumb { width: 20px; height: 20px; margin-top: -8px; margin-left: 2px; }

.right { display: flex; flex-direction: column; gap: 8px; }
.motion { height: 718px; padding: 0 2px 3px 1px; }
.motion .tabs { padding-left: 21px; gap: 48px; height: 48px; align-items: flex-start; }
.motion .cut { width: 70px; margin-left: 36px; border-right: 1px solid #555; overflow: hidden; }
.moretabs { height: 47px; margin-left: -34px; }
.mt { height: 667px; padding: 8px 62px 0 8px; border: 2px solid #2d2d2d; border-radius: 8px; font-family: Inter, sans-serif; }
.brand { display: flex; justify-content: space-between; height: 62px; }
h1 { margin: 5px 0 0 8px; font-size: 24px; font-weight: 500; line-height: 25px; color: #7e53da; }
h1 b { display: block; font-weight: 900; }
.pro { justify-content: center; width: 106px; height: 56px; padding-bottom: 2px; background: #0d0d0d; border: 2px solid #2d2d2d; border-radius: 8px; font-family: "Noto Sans CJK SC", sans-serif; }
.kit { display: grid; grid-template-columns: 138px 56px 56px 138px; gap: 6px; }
.box { border: 2px solid #2d2d2d; border-radius: 8px; }
.easing { grid-column: 1 / -1; display: flex; flex-direction: column; gap: 6px; padding: 10px 12px; height: 156px; }
.ease { display: flex; align-items: center; height: 40px; }
.dir { display: flex; justify-content: center; width: 36px; color: #4a4a4a; }
.ease input[type="range"] { width: 160px; height: 28px; margin-left: 18px; }
.ease input::-webkit-slider-runnable-track { height: 4px; background: linear-gradient(90deg, transparent 36px, #4f4f4f 36px); }
.ease input::-webkit-slider-thumb { width: 28px; height: 28px; margin-top: -12px; }
.val, .pair input { height: 40px; padding: 0 0 2px 16px; background: #0d0d0d; border: 2px solid #2d2d2d; border-radius: 8px; font-family: "Noto Sans CJK SC", sans-serif; }
.val { width: 80px; margin-left: 32px; }
.red { justify-content: center; width: 40px; height: 40px; margin-left: 12px; background: #1a1a1a; color: #ec5b57; }
.anchors { grid-column: 1 / 3; display: grid; grid-template-columns: repeat(3, 47px); grid-auto-rows: 47px; gap: 9px; height: 216px; padding: 24px 18px; }
.anchors button { --p: #cfb5ff; background-color: #8f5eff; background-repeat: no-repeat; }
.anchors .tl, .anchors .tr, .anchors .bl, .anchors .br { background-image: linear-gradient(var(--p), var(--p)), linear-gradient(var(--p), var(--p)); background-size: 36px 9px, 9px 36px; }
.anchors .tl { background-position: left top; }
.anchors .tr { background-position: right top; }
.anchors .bl { background-position: left bottom; }
.anchors .br { background-position: right bottom; }
.anchors .t { border-top: 9px solid var(--p); }
.anchors .b { border-bottom: 9px solid var(--p); }
.anchors .l { border-left: 9px solid var(--p); }
.anchors .r { border-right: 9px solid var(--p); }
.anchors .c { border: 9px solid var(--p); }
.stack { grid-column: 3 / 5; display: flex; flex-direction: column; gap: 6px; }
.key { justify-content: center; gap: 12px; height: 56px; padding-right: 3px; background: #191919; border: 2px solid #2d2d2d; border-radius: 8px; color: #dcdcdc; font-size: 18px; font-weight: 500; }
.w2 { grid-column: 2 / 4; }
.half { grid-column: span 2; font-size: 16px; font-weight: 600; }
.captions { display: flex; justify-content: flex-end; gap: 20px; height: 30px; padding: 6px 18px 0 0; color: #d0d0d0; font-size: 18px; font-weight: 600; line-height: 28px; }
.pair { display: flex; gap: 6px; padding: 6px; }
.pair input { width: 58px; padding-left: 14px; }

.props { flex: 1; padding: 0 17px 0 1px; }
.prophead { display: flex; justify-content: space-between; align-items: flex-start; height: 97px; padding: 11px 20px 0 23px; border-bottom: 3px solid #000; color: #c8c8c8; }
.prophead svg { margin-top: 7px; }
.fold { width: 100%; height: 52px; padding: 2px 0 0 23px; border-bottom: 4px solid #000; border-right: 1px solid #000; }
</style>
